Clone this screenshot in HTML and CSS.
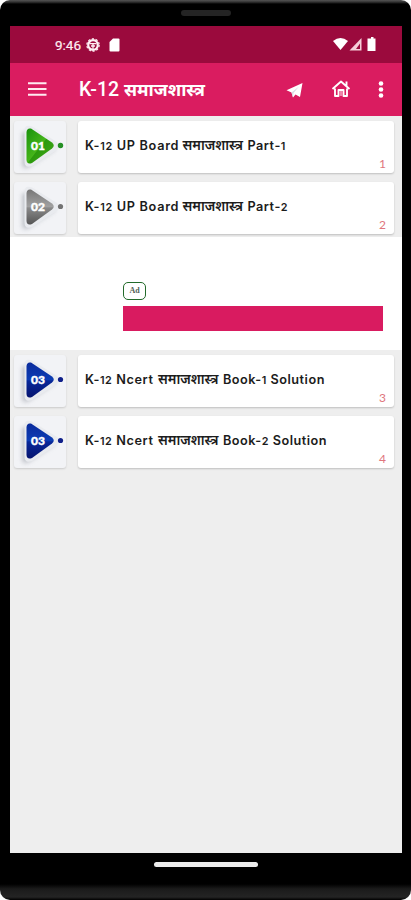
FILE: index.html
```html
<!DOCTYPE html>
<html lang="hi">
<head>
<meta charset="utf-8">
<title>K-12 समाजशास्त्र</title>
<link rel="stylesheet" href="styles.css">
</head>
<body>
<svg width="0" height="0" class="defs">
  <defs>
    <linearGradient id="green" x1="0" y1="0" x2="1" y2="1"><stop offset="0" stop-color="#18920c"/><stop offset=".5" stop-color="#45b51a"/><stop offset=".52" stop-color="#2c9a0d"/><stop offset="1" stop-color="#43a81c"/></linearGradient>
    <linearGradient id="gray" x1="0" y1="0" x2="0" y2="1"><stop offset="0" stop-color="#777"/><stop offset=".5" stop-color="#a2a2a2"/><stop offset=".52" stop-color="#8a8a8a"/><stop offset="1" stop-color="#555"/></linearGradient>
    <linearGradient id="blue" x1="0" y1="0" x2="0" y2="1"><stop offset="0" stop-color="#0a2b9c"/><stop offset=".5" stop-color="#0c3db4"/><stop offset=".52" stop-color="#08289a"/><stop offset="1" stop-color="#06146f"/></linearGradient>
    <filter id="soft" x="-30%" y="-30%" width="160%" height="160%"><feGaussianBlur stdDeviation="2"/></filter>
    <g id="plate">
      <path d="M8 12 L8 44 Q9 49 15 46 L42 28 L17 9Z" fill="#a9adb5" opacity=".65" filter="url(#soft)"/>
      <path d="M10.500 10 Q10.500 2.500 18 5.500 L43 21 Q47 25 43 29 L18 45 Q10.500 48 10.500 40Z" fill="#e9ebef"/>
    </g>
    <path id="play" d="M12.500 11 Q13 6.600 17 7.600 L38 21.500 Q41.500 24.500 38 27.500 L18 42 Q13 44 12.500 39Z"/>
  </defs>
</svg>
<div class="phone">
  <div class="speaker-row"><div class="speaker"></div></div>
  <div class="screen">
    <div class="status">
      <span class="time">9:46</span>
      <svg class="gear" width="14" height="14" viewBox="0 0 14 14"><circle cx="7" cy="7" r="4.800" fill="none" stroke="#fff0f4" stroke-width="2.200"/><circle cx="7" cy="7" r="6.200" fill="none" stroke="#fff0f4" stroke-width="1.200" stroke-dasharray="2.200 1.700"/><path d="M3.500 5.600h7M7 6v5M5 8h4" stroke="#fff0f4" stroke-width="1.300"/></svg>
      <svg class="sd" width="11" height="14" viewBox="0 0 11 14"><path d="M4 .500H9.500Q10.500 .500 10.500 1.500V12.500Q10.500 13.500 9.500 13.500H1.500Q.500 13.500 .500 12.500V4Z" fill="#fff"/></svg>
      <svg class="signals" width="44" height="15" viewBox="0 0 44 15"><path d="M0 4Q7.500 -2 15 4L7.500 13Z" fill="#fff"/><path d="M16.500 13.500L28.500 1V13.500Z" fill="#f5cdd8"/><path d="M23 12L27 6.500V12Z" fill="#9b0a3d"/><path d="M36.500 1.500H38V0H40.500V1.500H42.500V14H34.500V1.500Z" fill="#fff"/></svg>
    </div>
    <header class="appbar">
      <svg class="menu" width="20" height="14" viewBox="0 0 20 14"><path d="M0 1.200H18.500M0 7H18.500M0 12.800H18.500" stroke="#ffeaf1" stroke-width="2"/></svg>
      <h1>K-12 <span>समाजशास्त्र</span></h1>
      <svg class="plane" width="17" height="15" viewBox="0 0 17 15"><path d="M.500 7.200L16.500 0L14 14L9.500 11.500L7 14.500L5.500 9.500Z" fill="#fff"/><path d="M5.500 9.500L13 3.500L7.500 10L7 14.500Z" fill="#d9dce4"/></svg>
      <svg class="home" width="20" height="18" viewBox="0 0 20 18"><path d="M1.500 9L10 1.500L18.500 9M15.500 6V1.500M4 8.500V16H7.500V10H12.500V16H16V8.500" fill="none" stroke="#fff" stroke-width="1.900" stroke-linejoin="round"/><path d="M10 11V16" stroke="#f7a8c4" stroke-width="1.500"/></svg>
      <svg class="more" width="6" height="17" viewBox="0 0 6 17"><circle cx="3" cy="2.500" r="2.300" fill="#fff"/><circle cx="3" cy="8.500" r="2.300" fill="#fff"/><circle cx="3" cy="14.500" r="2.300" fill="#fff"/></svg>
    </header>
    <main>
      <section class="list first">
        <div class="row">
          <div class="thumb"><svg width="52" height="52" viewBox="0 0 52 52"><use href="#plate"/><use href="#play" fill="url(#green)"/><circle cx="46.500" cy="24.500" r="2.700" fill="#269025"/><text x="24" y="28.500" text-anchor="middle">01</text></svg></div>
          <div class="card"><p><span class="lead up">K-<i>12</i> UP Board</span><span class="hindi">समाजशास्त्र</span><span class="tail">Part-<i>1</i></span></p><span class="num">1</span></div>
        </div>
        <div class="row">
          <div class="thumb"><svg width="52" height="52" viewBox="0 0 52 52"><use href="#plate"/><use href="#play" fill="url(#gray)"/><circle cx="46.500" cy="24.500" r="2.600" fill="#737373"/><text x="24" y="28.500" text-anchor="middle">02</text></svg></div>
          <div class="card"><p><span class="lead up">K-<i>12</i> UP Board</span><span class="hindi">समाजशास्त्र</span><span class="tail">Part-<i>2</i></span></p><span class="num">2</span></div>
        </div>
      </section>
      <section class="ad"><span class="badge">Ad</span><div class="banner"></div></section>
      <section class="list second">
        <div class="row">
          <div class="thumb"><svg width="52" height="52" viewBox="0 0 52 52"><use href="#plate"/><use href="#play" fill="url(#blue)"/><circle cx="46.500" cy="24.500" r="2.600" fill="#10208a"/><text x="24" y="28.500" text-anchor="middle">03</text></svg></div>
          <div class="card"><p><span class="lead nc">K-<i>12</i> Ncert</span><span class="hindi">समाजशास्त्र</span><span class="tail book">Book-<i>1</i> Solution</span></p><span class="num">3</span></div>
        </div>
        <div class="row">
          <div class="thumb"><svg width="52" height="52" viewBox="0 0 52 52"><use href="#plate"/><use href="#play" fill="url(#blue)"/><circle cx="46.500" cy="24.500" r="2.600" fill="#10208a"/><text x="24" y="28.500" text-anchor="middle">03</text></svg></div>
          <div class="card"><p><span class="lead nc">K-<i>12</i> Ncert</span><span class="hindi">समाजशास्त्र</span><span class="tail book">Book-<i>2</i> Solution</span></p><span class="num">4</span></div>
        </div>
      </section>
    </main>
  </div>
  <div class="chin"><div class="handle"></div></div>
</div>
</body>
</html>
```

FILE: styles.css
```css
* { box-sizing: border-box; }
body { margin: 0; background: #fff; font-family: Roboto, "Noto Sans", "Noto Sans Devanagari", sans-serif; }
.defs { display: block; }
.phone { width: 411px; height: 900px; background: linear-gradient(#555 0, #333 2px, #000 4px, #000 884px, #1b1b1b 889px, #242424 897px, #000 900px); border-radius: 10px; overflow: hidden; }
.speaker-row { height: 26px; padding-top: 10px; }
.speaker { width: 50px; height: 6px; margin: 0 auto; border-radius: 3px; background: #242424; }
.screen { width: 392px; height: 827px; margin-left: 10px; background: #eee; display: flex; flex-direction: column; }
.status { height: 37px; background: #9b0a3d; display: flex; align-items: center; padding: 0 25px 0 45px; color: #ffeef2; }
.time { font-size: 13.500px; width: 31px; -webkit-text-stroke: .2px #ffeef2; }
.sd { margin-left: 9px; }
.signals { margin-left: auto; }
.appbar { height: 53px; background: #da1c60; display: flex; align-items: center; padding: 0 18px 1px 18px; color: #fff; }
h1 { margin: 2px 0 0 31px; font-size: 19.500px; font-weight: 500; line-height: 30px; white-space: nowrap; width: 207px; }
h1 span { font-size: 17.700px; font-weight: 700; }
.plane { margin-top: 2px; }
.home { margin-left: 28px; }
.more { margin-left: auto; }
.list { display: flex; flex-direction: column; gap: 9px; padding: 5px 8px 0 4px; }
.first { height: 121px; }
.second { padding-top: 5px; }
.row { display: flex; gap: 12px; height: 52px; }
.thumb { width: 52px; height: 52px; background: #f2f3f6; border-radius: 3px; box-shadow: 0 1px 2px rgba(0,0,0,.15); }
.thumb svg { display: block; }
.thumb text { font: 900 12px Lato, sans-serif; fill: #fff; stroke: #fff; stroke-width: .4px; }
.card { flex: 1; background: #fff; border-radius: 3px; box-shadow: 0 1px 2px rgba(0,0,0,.2); display: flex; justify-content: space-between; padding: 0 8px 0 7px; }
.card p { margin: 0; display: flex; align-items: baseline; line-height: 49px; font-size: 12.700px; font-weight: 600; font-family: Inter, "Noto Sans", sans-serif; color: #1c1c1c; white-space: nowrap; }
.card i { font-style: normal; font-size: 10.800px; }
.up { width: 97.500px; letter-spacing: .7px; }
.nc { width: 73px; letter-spacing: .6px; }
.hindi { width: 65px; font-size: 13.700px; }
.tail { letter-spacing: .5px; }
.num { align-self: flex-end; font-family: Lato, sans-serif; font-size: 12px; line-height: 19px; color: #e0757d; }
.ad { height: 113px; background: #fff; padding: 45px 19px 0 113px; }
.badge { display: block; width: 23px; height: 18px; border: 1.500px solid #236a2a; border-radius: 5px; font: 700 8px/16px "Liberation Serif", serif; color: #526055; text-align: center; }
.banner { height: 25px; margin-top: 6px; background: #d91b60; }
.chin { height: 47px; padding-top: 9px; }
.handle { width: 104px; height: 5px; margin-left: 154px; border-radius: 3px; background: #ececec; }
```
